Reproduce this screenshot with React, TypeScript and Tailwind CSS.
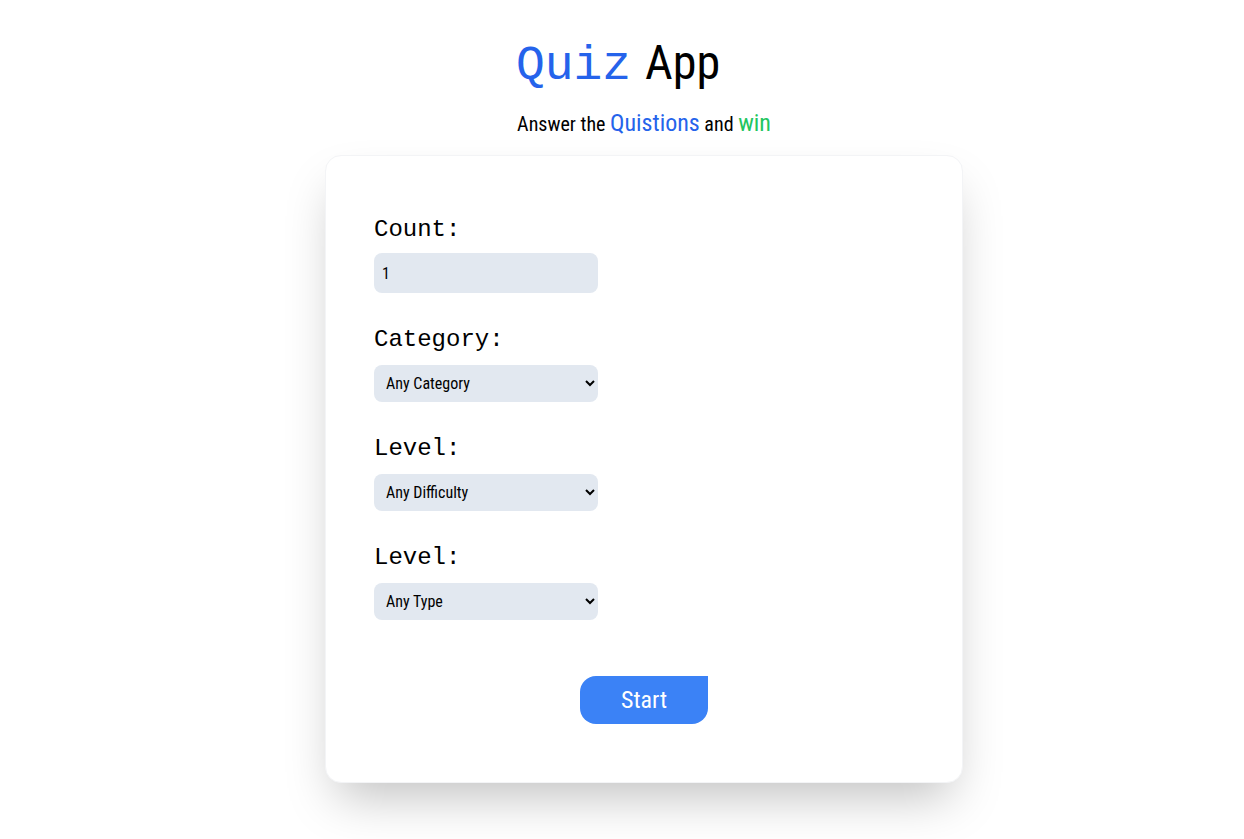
import React from 'react';

const fields = [
  { label: 'Category:', options: ['Any Category', 'General Knowledge', 'Books', 'Film', 'Music'] },
  { label: 'Level:', options: ['Any Difficulty', 'Easy', 'Medium', 'Hard'] },
  { label: 'Level:', options: ['Any Type', 'Multiple Choice', 'True / False'] },
];

export default function App() {
  return (
    <div className="min-h-screen bg-white flex flex-col items-center pl-[44px] font-['Roboto_Condensed','Roboto',sans-serif]">
      <h1 className="mt-[37px] mr-[52px] text-5xl leading-[52px] flex items-baseline gap-[14px]">
        <span className="text-[#2563eb] font-['Liberation_Mono',monospace]">Quiz</span>
        <span className="text-black">App</span>
      </h1>
      <p className="mt-[17px] text-[20px] leading-[28px] text-black">
        Answer the <span className="text-[24px] text-[#2563eb]">Quistions</span> and{' '}
        <span className="text-[24px] text-[#22c55e]">win</span>
      </p>
      <div className="mt-[17px] w-[638px] bg-white rounded-2xl border border-gray-100 shadow-2xl px-12 pt-[58px] pb-[58px]">
        <label className="block font-['Liberation_Mono',monospace] text-2xl leading-8 text-black">Count:</label>
        <input
          type="number"
          defaultValue={1}
          className="mt-[7px] block w-[224px] h-10 rounded-lg bg-[#e2e8f0] px-2 text-base text-black outline-none"
        />
        {fields.map((f, i) => (
          <div key={i} className="mt-[31px]">
            <label className="block font-['Liberation_Mono',monospace] text-2xl leading-8 text-black">{f.label}</label>
            <select className="mt-[9px] block w-[224px] h-[37px] rounded-lg bg-[#e2e8f0] px-2 text-base text-black outline-none">
              {f.options.map((o) => (
                <option key={o}>{o}</option>
              ))}
            </select>
          </div>
        ))}
        <div className="mt-14 flex justify-center">
          <button className="w-32 h-12 bg-[#3b82f6] text-white text-2xl rounded-2xl rounded-tr-none">Start</button>
        </div>
      </div>
    </div>
  );
}
